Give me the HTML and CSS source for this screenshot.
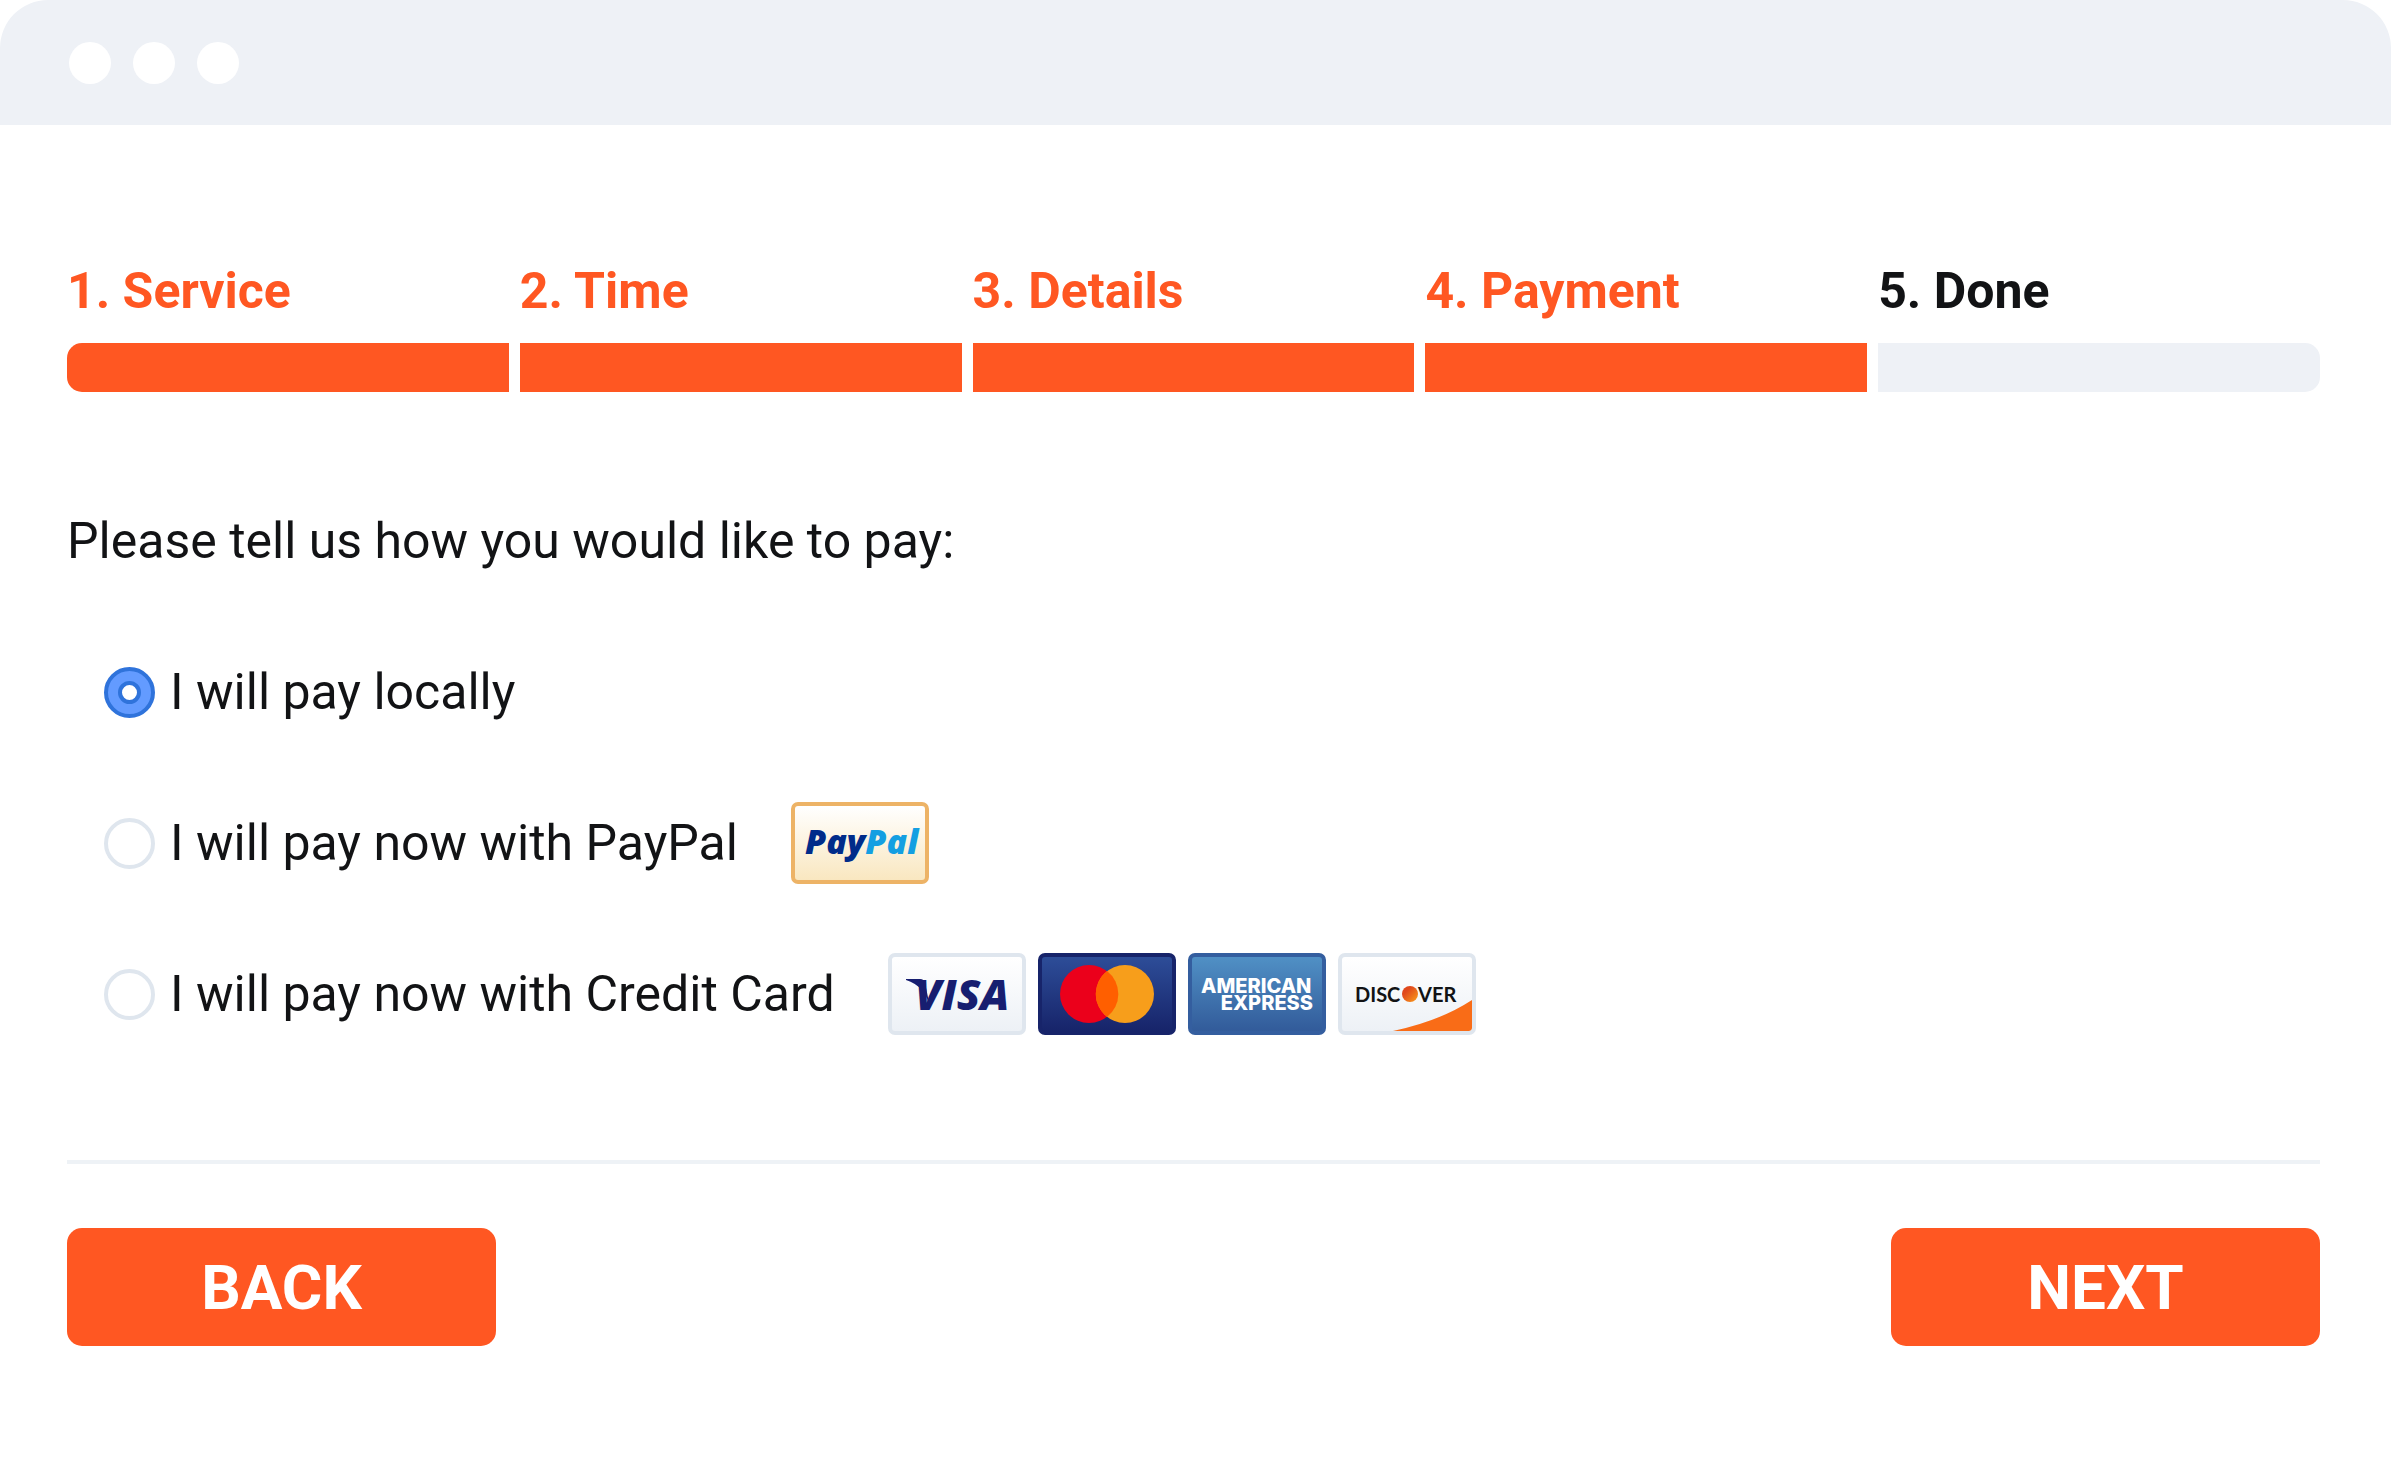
FILE: index.html
```
<!DOCTYPE html>
<html lang="en">
<head>
    <meta charset="UTF-8">
    <meta name="viewport" content="width=device-width, initial-scale=1.0">
    <title>Payment</title>
    <link rel="stylesheet" href="styles.css">
</head>
<body>
    <header>
        <span class="dot"></span>
        <span class="dot"></span>
        <span class="dot"></span>
    </header>

    <main>
        <ol class="steps">
            <li class="active">1. Service</li>
            <li class="active">2. Time</li>
            <li class="active">3. Details</li>
            <li class="active">4. Payment</li>
            <li>5. Done</li>
        </ol>

        <form>
            <fieldset>
                <legend>Please tell us how you would like to pay:</legend>

                <div class="option">
                    <input type="radio" name="payment" id="local" checked>
                    <label for="local">I will pay locally</label>
                </div>

                <div class="option">
                    <input type="radio" name="payment" id="paypal">
                    <label for="paypal">I will pay now with PayPal</label>
                    <div class="cards">
                        <svg class="card card-paypal" viewBox="0 0 130 74">
                            <text class="paypal" x="10" y="48"><tspan fill="#002c8a">Pay</tspan><tspan fill="#149fe2">Pal</tspan></text>
                        </svg>
                    </div>
                </div>

                <div class="option">
                    <input type="radio" name="payment" id="credit">
                    <label for="credit">I will pay now with Credit Card</label>
                    <div class="cards">
                        <svg class="card" viewBox="0 0 130 74">
                            <path fill="#171e70" d="M14 22h14q4 0 5 4l5 24q-5-21-24-27z"/>
                            <text class="visa" x="23" y="53">VISA</text>
                        </svg>
                        <svg class="card card-mastercard" viewBox="0 0 130 74">
                            <circle cx="47" cy="37" r="29" fill="#eb001b"/>
                            <circle cx="83" cy="37" r="29" fill="#f79e1b"/>
                            <path fill="#ff5f00" d="M65 14a29 29 0 0 1 0 46a29 29 0 0 1 0-46z"/>
                        </svg>
                        <svg class="card card-amex" viewBox="0 0 130 74">
                            <text class="amex" x="9" y="36">AMERICAN</text>
                            <text class="amex" x="121" y="53" text-anchor="end">EXPRESS</text>
                        </svg>
                        <svg class="card" viewBox="0 0 130 74">
                            <defs>
                                <linearGradient id="ball" x1="0" y1="0" x2="1" y2="1">
                                    <stop offset=".3" stop-color="#e0481c"/>
                                    <stop offset="1" stop-color="#fba01c"/>
                                </linearGradient>
                            </defs>
                            <path fill="#f96c17" d="M51 74Q98 64 130 43v28q0 3-3 3z"/>
                            <text class="discover" x="13" y="45">DISC</text>
                            <circle cx="68" cy="37" r="8" fill="url(#ball)"/>
                            <text class="discover" x="76" y="45">VER</text>
                        </svg>
                    </div>
                </div>
            </fieldset>

            <div class="buttons">
                <button type="button">BACK</button>
                <button type="button">NEXT</button>
            </div>
        </form>
    </main>
</body>
</html>
```
FILE: styles.css
```
* {
    box-sizing: border-box;
    padding: 0;
    margin: 0;
}

body {
    background: #fff;
    color: #121315;
    font-family: Roboto, sans-serif;
    font-size: 50px;
    line-height: 60px;
}

header {
    display: flex;
    gap: 22px;
    padding: 42px 69px 41px;
    background: #eef1f6;
    border-radius: 48px 48px 0 0;
}

.dot {
    width: 42px;
    height: 42px;
    background: #fff;
    border-radius: 50%;
}

main {
    padding: 136px 71px 135px 67px;
}

.steps {
    display: grid;
    grid-template-columns: repeat(5, 1fr);
    gap: 11px;
    list-style: none;
    font-weight: 700;
}

.steps li::after {
    content: "";
    display: block;
    height: 49px;
    margin-top: 22px;
    background: #eef1f6;
}

.steps .active {
    color: #ff5722;
}

.steps .active::after {
    background: #ff5722;
}

.steps li:first-child::after {
    border-radius: 15px 0 0 15px;
}

.steps li:last-child::after {
    border-radius: 0 15px 15px 0;
}

fieldset {
    border: none;
    padding-top: 80px;
    margin-top: 119px;
}

.option {
    display: flex;
    align-items: center;
    height: 82px;
    margin: 0 0 69px 37px;
}

.option input {
    appearance: none;
    display: grid;
    place-items: center;
    width: 51px;
    height: 51px;
    margin-right: 15px;
    border: 4px solid #dfe6ee;
    border-radius: 50%;
}

.option input:checked {
    background: #639bff;
    border-color: #2f73db;
}

.option input:checked::before {
    content: "";
    width: 15px;
    height: 15px;
    background: #fff;
    border: 4px solid #2f73db;
    border-radius: 50%;
}

.cards {
    display: flex;
    gap: 12px;
    margin-left: 53px;
}

.card {
    width: 138px;
    height: 82px;
    border: 4px solid #dfe6ee;
    border-radius: 7px;
    background: linear-gradient(#fff, #edf1f6);
}

.card-paypal {
    border-color: #edb366;
    background: linear-gradient(#fff, #f9e7c0);
}

.card-mastercard {
    border-color: #17246a;
    background: linear-gradient(#2d4d98, #17246a);
}

.card-amex {
    border-color: #345e9f;
    background: linear-gradient(#5090c5, #325b9a);
}

.paypal {
    font: italic 800 34px "Open Sans", sans-serif;
}

.visa {
    font: italic 800 43px "Open Sans", sans-serif;
    fill: #171e70;
}

.amex {
    font: 800 20px Inter, sans-serif;
    fill: #fff;
}

.discover {
    font: 700 20px Lato, sans-serif;
    fill: #121315;
}

.buttons {
    display: flex;
    justify-content: space-between;
    margin-top: 56px;
    padding-top: 64px;
    border-top: 4px solid #eef2f6;
}

button {
    width: 429px;
    height: 118px;
    background: #ff5722;
    border: none;
    border-radius: 15px;
    color: #fff;
    font: 700 62px Roboto, sans-serif;
    cursor: pointer;
}
```
